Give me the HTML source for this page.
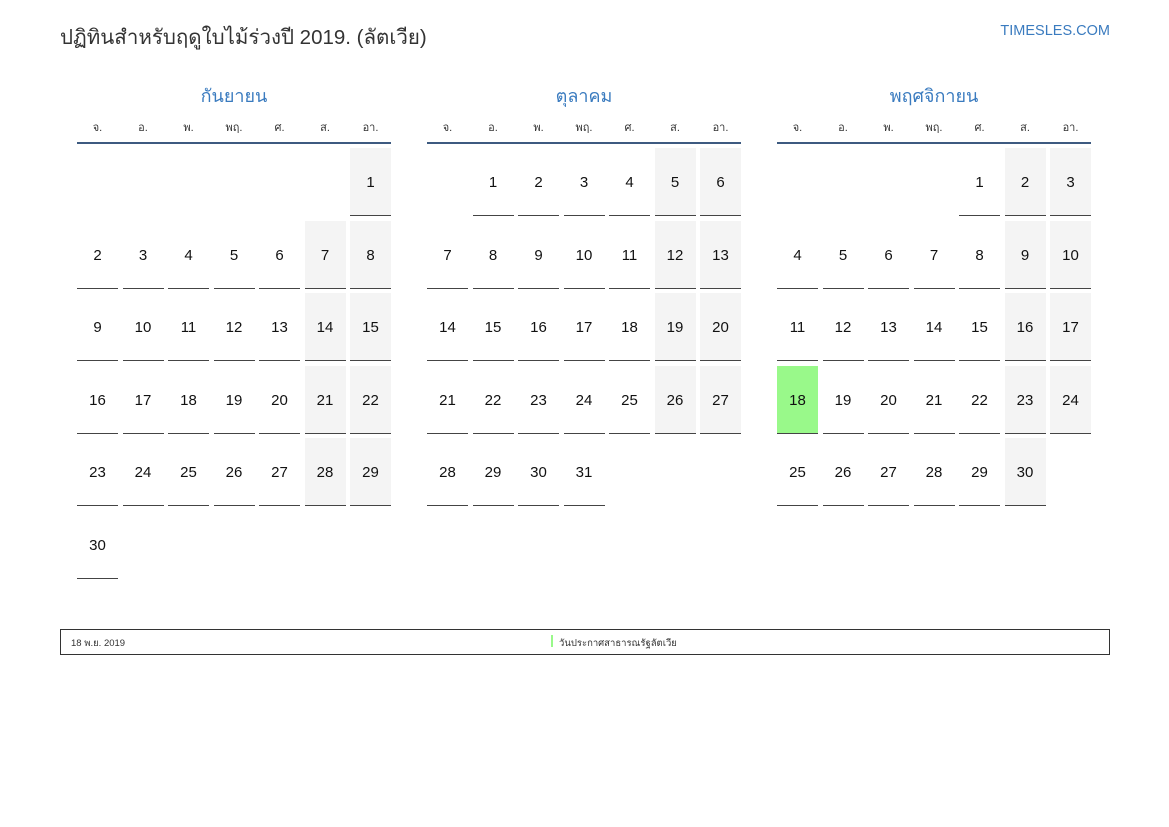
<!DOCTYPE html>
<html><head><meta charset="utf-8"><style>
*{margin:0;padding:0;box-sizing:border-box}
body{width:1169px;height:827px;background:#fff;font-family:"Liberation Sans","Noto Sans CJK SC",sans-serif;position:relative;overflow:hidden}
.title{position:absolute;left:60px;top:21px;font-size:20.5px;color:#333}
.site{position:absolute;right:59px;top:23px;font-size:14.5px;color:#3a7bbf}
.m{position:absolute;top:83px;width:314px}
.mn{text-align:center;font-size:18px;color:#3a7bbf;height:30px;padding-top:0px;line-height:26px}
.wd{display:grid;grid-template-columns:repeat(7,41px);column-gap:4.5px;font-size:11px;color:#333;text-align:center;height:31px;line-height:30px;border-bottom:2px solid #3d5a80}
.g{display:grid;grid-template-columns:repeat(7,41px);column-gap:4.5px;grid-auto-rows:68px;row-gap:4.6px;margin-top:4px}
.g div{border-bottom:1px solid #444;font-size:15px;color:#111;text-align:center;line-height:70px}
.g .e{border:none}
.g .w{background:#f4f4f4}
.g .h{background:#99f98a}
.foot{position:absolute;left:60px;top:629px;width:1050px;height:26px;border:1px solid #333;font-size:9.5px;color:#333}
</style></head><body>
<div class="title">ปฏิทินสำหรับฤดูใบไม้ร่วงปี 2019. (ลัตเวีย)</div>
<div class="site">TIMESLES.COM</div>

<div class="m" style="left:77px">
<div class="mn">กันยายน</div>
<div class="wd"><span>จ.</span><span>อ.</span><span>พ.</span><span>พฤ.</span><span>ศ.</span><span>ส.</span><span>อา.</span></div>
<div class="g">
<div class="e"></div><div class="e"></div><div class="e"></div><div class="e"></div><div class="e"></div><div class="e"></div><div class="w">1</div>
<div>2</div><div>3</div><div>4</div><div>5</div><div>6</div><div class="w">7</div><div class="w">8</div>
<div>9</div><div>10</div><div>11</div><div>12</div><div>13</div><div class="w">14</div><div class="w">15</div>
<div>16</div><div>17</div><div>18</div><div>19</div><div>20</div><div class="w">21</div><div class="w">22</div>
<div>23</div><div>24</div><div>25</div><div>26</div><div>27</div><div class="w">28</div><div class="w">29</div>
<div>30</div>
</div></div>

<div class="m" style="left:427px">
<div class="mn">ตุลาคม</div>
<div class="wd"><span>จ.</span><span>อ.</span><span>พ.</span><span>พฤ.</span><span>ศ.</span><span>ส.</span><span>อา.</span></div>
<div class="g">
<div class="e"></div><div>1</div><div>2</div><div>3</div><div>4</div><div class="w">5</div><div class="w">6</div>
<div>7</div><div>8</div><div>9</div><div>10</div><div>11</div><div class="w">12</div><div class="w">13</div>
<div>14</div><div>15</div><div>16</div><div>17</div><div>18</div><div class="w">19</div><div class="w">20</div>
<div>21</div><div>22</div><div>23</div><div>24</div><div>25</div><div class="w">26</div><div class="w">27</div>
<div>28</div><div>29</div><div>30</div><div>31</div>
</div></div>

<div class="m" style="left:777px">
<div class="mn">พฤศจิกายน</div>
<div class="wd"><span>จ.</span><span>อ.</span><span>พ.</span><span>พฤ.</span><span>ศ.</span><span>ส.</span><span>อา.</span></div>
<div class="g">
<div class="e"></div><div class="e"></div><div class="e"></div><div class="e"></div><div>1</div><div class="w">2</div><div class="w">3</div>
<div>4</div><div>5</div><div>6</div><div>7</div><div>8</div><div class="w">9</div><div class="w">10</div>
<div>11</div><div>12</div><div>13</div><div>14</div><div>15</div><div class="w">16</div><div class="w">17</div>
<div class="h">18</div><div>19</div><div>20</div><div>21</div><div>22</div><div class="w">23</div><div class="w">24</div>
<div>25</div><div>26</div><div>27</div><div>28</div><div>29</div><div class="w">30</div>
</div></div>

<div class="foot">
<span style="position:absolute;left:10px;top:6px">18 พ.ย. 2019</span>
<span style="position:absolute;left:490px;top:5px;width:2px;height:12px;background:#99f98a"></span>
<span style="position:absolute;left:498px;top:6px">วันประกาศสาธารณรัฐลัตเวีย</span>
</div>
</body></html>
